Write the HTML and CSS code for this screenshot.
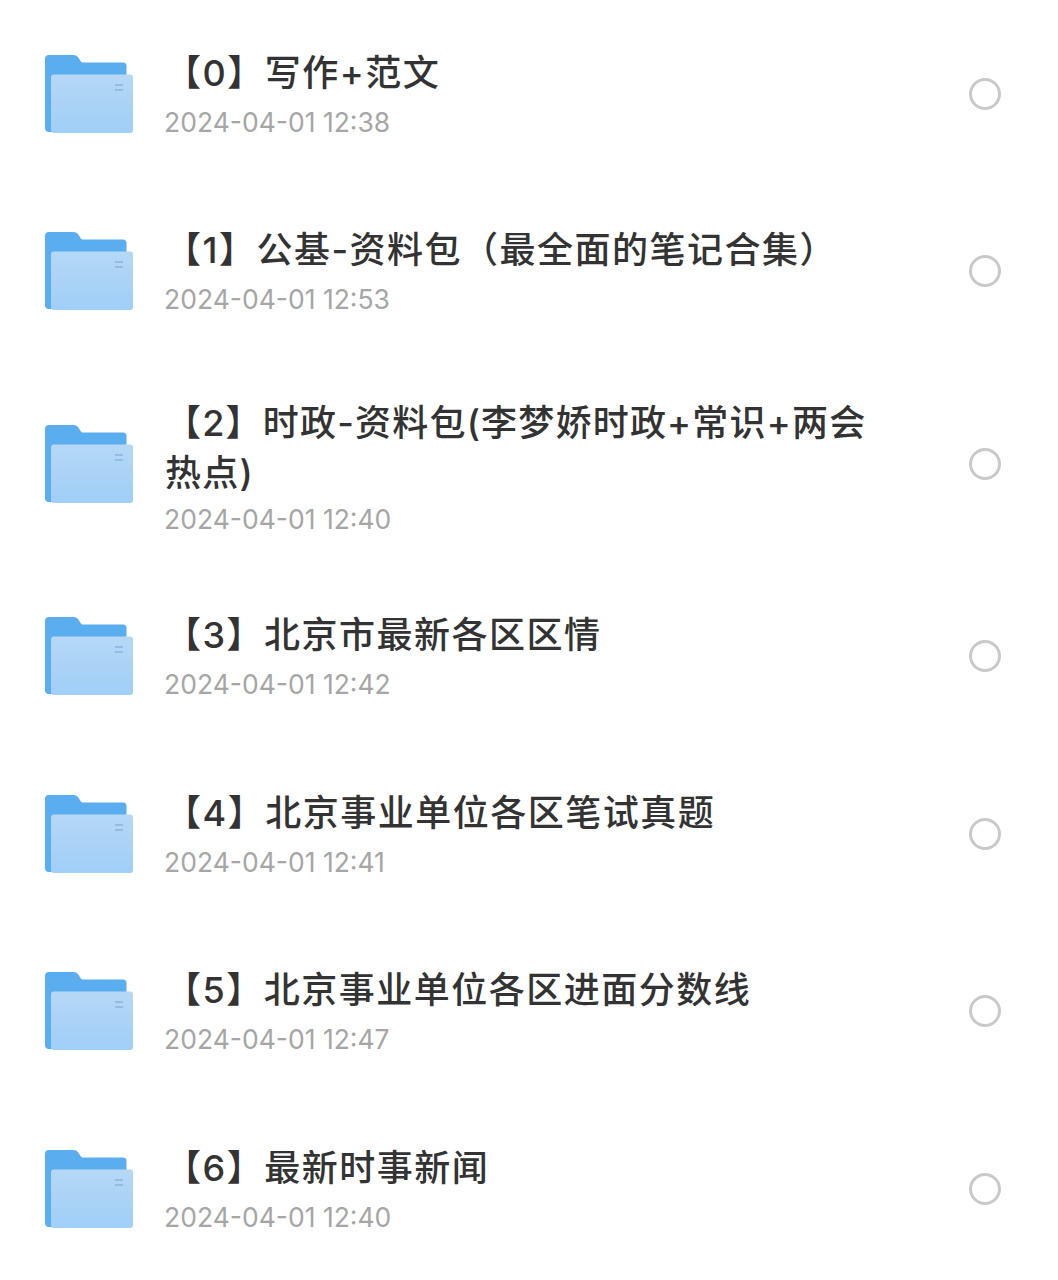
FILE: index.html
```html
<!DOCTYPE html>
<html lang="zh-CN">
<head>
<meta charset="utf-8">
<title>文件列表</title>
<link rel="stylesheet" href="styles.css">
</head>
<body>
<svg class="defs" width="0" height="0" aria-hidden="true">
  <defs>
    <linearGradient id="front" x1="0" y1="0" x2="0" y2="1">
      <stop offset="0" stop-color="#b6d8f6"/>
      <stop offset="0.55" stop-color="#a9d2f6"/>
      <stop offset="1" stop-color="#a0cff8"/>
    </linearGradient>
    <symbol id="folder" viewBox="0 0 90 80">
      <path d="M1 5a4 4 0 0 1 4-4h24c3 0 4.500 1 6 3.500l1.500 2.500c.8 1.200 1.500 1.500 3 1.500H79a3.500 3.500 0 0 1 3.500 3.500V78H5a4 4 0 0 1-4-4Z" fill="#5aaef0"/>
      <rect x="7" y="20.500" width="82" height="58.500" rx="3" fill="url(#front)"/>
      <path d="M71 31h8M71 36h8" stroke="#8fb3d6" stroke-width="1.400" fill="none"/>
    </symbol>
  </defs>
</svg>
<ul class="list">
  <li class="row">
    <svg class="folder"><use href="#folder"/></svg>
    <div class="info"><div class="title">【0】写作+范文</div><div class="date">2024-04-01 12:38</div></div>
    <span class="radio"></span>
  </li>
  <li class="row">
    <svg class="folder"><use href="#folder"/></svg>
    <div class="info"><div class="title">【1】公基-资料包（最全面的笔记合集）</div><div class="date">2024-04-01 12:53</div></div>
    <span class="radio"></span>
  </li>
  <li class="row double">
    <svg class="folder"><use href="#folder"/></svg>
    <div class="info"><div class="title">【2】时政-资料包(李梦娇时政+常识+两会热点)</div><div class="date">2024-04-01 12:40</div></div>
    <span class="radio"></span>
  </li>
  <li class="row">
    <svg class="folder"><use href="#folder"/></svg>
    <div class="info"><div class="title">【3】北京市最新各区区情</div><div class="date">2024-04-01 12:42</div></div>
    <span class="radio"></span>
  </li>
  <li class="row">
    <svg class="folder"><use href="#folder"/></svg>
    <div class="info"><div class="title">【4】北京事业单位各区笔试真题</div><div class="date">2024-04-01 12:41</div></div>
    <span class="radio"></span>
  </li>
  <li class="row">
    <svg class="folder"><use href="#folder"/></svg>
    <div class="info"><div class="title">【5】北京事业单位各区进面分数线</div><div class="date">2024-04-01 12:47</div></div>
    <span class="radio"></span>
  </li>
  <li class="row">
    <svg class="folder"><use href="#folder"/></svg>
    <div class="info"><div class="title">【6】最新时事新闻</div><div class="date">2024-04-01 12:40</div></div>
    <span class="radio"></span>
  </li>
</ul>
</body>
</html>
```
FILE: styles.css
```css
html, body {
  margin: 0;
  padding: 0;
  background: #fff;
  height: 1280px;
  overflow: hidden;
}
.defs {
  display: block;
  height: 0;
}
.list {
  list-style: none;
  margin: 0;
  padding: 5px 0 0 44px;
}
.row {
  display: flex;
  align-items: center;
  height: 177.5px;
  padding-right: 57px;
}
.row.double {
  height: 207.5px;
}
.folder {
  flex: none;
  width: 90px;
  height: 80px;
}
.info {
  flex: 1;
  min-width: 0;
  margin-left: 31px;
  margin-right: 96px;
}
.row.double .info {
  padding-top: 8px;
}
.title {
  font-family: Inter, "Noto Sans CJK SC", "Noto Sans", sans-serif;
  font-size: 36px;
  font-weight: 500;
  line-height: 50px;
  letter-spacing: 1.5px;
  color: #333;
}
.row.double .title {
  letter-spacing: 1.2px;
}
.date {
  font-family: Inter, "Noto Sans", sans-serif;
  font-size: 26.5px;
  line-height: 36px;
  color: #a6a6a6;
  margin: 6px 0 0 -1px;
}
.row.double .date {
  margin-top: 3px;
}
.radio {
  flex: none;
  width: 32px;
  height: 32px;
  box-sizing: border-box;
  border: 3px solid #c9c9c9;
  border-radius: 50%;
}
```
